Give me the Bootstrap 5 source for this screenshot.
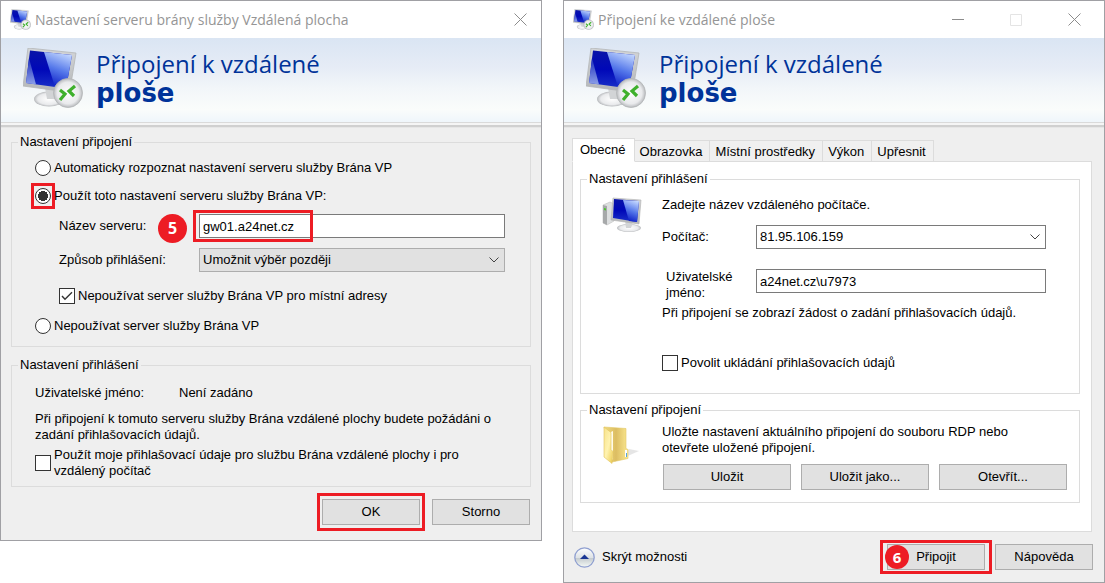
<!DOCTYPE html>
<html lang="cs">
<head>
<meta charset="utf-8">
<meta name="viewport" content="width=device-width, initial-scale=1">
<title>Připojení ke vzdálené ploše</title>
<link rel="stylesheet" href="https://cdn.jsdelivr.net/npm/bootstrap@5.3.0/dist/css/bootstrap.min.css">
<style>
  body { background: #fff; color: #000; font: 13px/16px "Liberation Sans", Arial, sans-serif; }
  .desk { gap: 21px; }
  .win { flex: 1 1 0; min-width: 0; background: #efefef; border: 1px solid #a0a0a4; }
  .titlebar { height: 37px; padding: 0 14px 0 9px; background: #fff; color: #959595; font: 14px/20px "Open Sans", sans-serif; gap: 4px; }
  .titlebar-wide { padding-right: 23px; }
  .titlebar h1 { font: inherit; }
  .winbtn { padding: 0; border: 0; background: none; color: #8c8c8c; line-height: 0; }
  .winbtns { gap: 46px; }
  .banner { height: 84px; padding: 0 0 4px 22px; gap: 13px; background: linear-gradient(#dae5f3 0, #e6ecf6 35%, #f2f6f9 60%, #fafcfb 85%, #eff6fb 100%); color: #003399; }
  .banner h2 { font: 24px/29px "Open Sans", sans-serif; }
  .banner strong { font: bold 26px/29px "DejaVu Sans", sans-serif; }
  .edge { height: 6px; background: linear-gradient(#dadada 0 1px, #f5f5f5 1px 3px, #d0d0d0 3px 5px, #e6e6e6 5px); }
  .group { border: 1px solid #dcdcdc; }
  .group legend { float: none; width: auto; margin: 0 0 0 -17px; padding: 0 2px; font-size: 13px; line-height: 16px; }
  .g-left { margin: 0 10px; padding: 0 25px 0 23px; }
  .gateway { padding-top: 6px; }
  .opt { gap: 3px; }
  .pick { appearance: none; flex: none; width: 16px; height: 16px; margin: 0; border: 1px solid #333; background: #fff; }
  .pick[type=radio] { border-radius: 50%; }
  .pick[type=radio]:checked { background: radial-gradient(circle, #333 0 5px, #fff 5px); }
  .pick[type=checkbox]:checked { background: #fff url("data:image/svg+xml,%3Csvg xmlns='http://www.w3.org/2000/svg' viewBox='0 0 14 14'%3E%3Cpath d='M2 7l3 3.300 7-7' fill='none' stroke='%23333' stroke-width='1.400'/%3E%3C/svg%3E"); }
  .indent { padding-left: 24px; }
  .field { width: 100%; height: 24px; padding: 0 3px; border: 1px solid #7a7a7a; border-radius: 0; background: #fff; color: #000; }
  select.field { appearance: none; background: #fff url("data:image/svg+xml,%3Csvg xmlns='http://www.w3.org/2000/svg' width='10' height='6'%3E%3Cpath d='M.5.5L5 5 9.500.5' fill='none' stroke='%23444'/%3E%3C/svg%3E") no-repeat right 5px center; }
  select.field.flat { background-color: #e1e1e1; border-color: #adadad; }
  .key { width: 140px; flex: none; }
  .push { height: 26px; padding: 0; border: 1px solid #adadad; background: #e1e1e1; color: #000; }
  .push-sm { width: 98px; }
  .mark-frame { position: absolute; border: 3px solid #ed1c24; pointer-events: none; }
  .on-radio { inset: -5px -4px; }
  .on-name { inset: -4px auto -4px -6px; width: 120px; }
  .on-ok { inset: -6px -5px; }
  .on-connect { inset: -4px -7px; }
  .step { position: absolute; border-radius: 50%; background: #ed1c24; color: #fff; font-family: "Open Sans", sans-serif; font-weight: bold; text-align: center; }
  .step-5 { left: -41px; top: 0; width: 29px; height: 29px; font-size: 16px; line-height: 28px; }
  .step-6 { left: -2px; top: 1px; width: 24px; height: 24px; font-size: 15px; line-height: 24px; }
  .gap-v6 { margin-top: 6px; } .gap-v10 { margin-top: 10px; } .gap-v12 { margin-top: 12px; } .gap-v14 { margin-top: 14px; } .gap-v16 { margin-top: 16px; }
  .end-v7 { margin-bottom: 7px; } .end-v12 { margin-bottom: 12px; }
  .actions { gap: 12px; padding: 0 11px 15px 0; }
  .tabs { margin: 10px 8px -1px; }
  .tab { height: 22px; padding: 1px 7px 0 5px; border: 1px solid #dcdcdc; border-left-width: 0; background: #f0f0f0; color: #000; }
  .tab.active { position: relative; height: 24px; padding: 0 8px 0 7px; border-left-width: 1px; border-bottom-color: #fff; background: #fff; }
  .pane { margin: 0 12px 0 8px; padding: 9px 11px 28px 7px; border: 1px solid #dcdcdc; background: #fff; }
  .pane .group { padding: 0 12px 0 21px; }
  .pane .group legend { margin-left: -15px; }
  .pic { width: 60px; flex: none; }
  .key-r { width: 94px; flex: none; }
  .to-field { margin-right: 21px; }
  .save-row { padding: 34px 0 22px; }
  .savebar { gap: 10px; padding-left: 1px; }
  .bottom { gap: 10px; padding: 12px 11px 12px 10px; }
  .expander { padding: 0; border: 0; background: none; color: #000; gap: 7px; }
</style>
</head>
<body>
<svg width="0" height="0" class="position-absolute" aria-hidden="true">
  <defs>
    <linearGradient id="screen" x1="0" y1="0" x2="0" y2="1"><stop offset="0" stop-color="#0a14a8"/><stop offset=".5" stop-color="#0008b8"/><stop offset="1" stop-color="#1a30c8"/></linearGradient>
    <linearGradient id="shine" x1="0.7" y1="0" x2="0.4" y2="1"><stop offset="0" stop-color="#c4d8ff"/><stop offset=".5" stop-color="#5578ea"/><stop offset="1" stop-color="#0818c4"/></linearGradient>
    <linearGradient id="glow" x1="0" y1="0" x2="0" y2="1"><stop offset="0" stop-color="#1a2cbc"/><stop offset="1" stop-color="#8c9fe8"/></linearGradient>
    <linearGradient id="metal" x1="0" y1="0" x2="0" y2="1"><stop offset="0" stop-color="#d4d6d8"/><stop offset="1" stop-color="#b4b6b8"/></linearGradient>
    <radialGradient id="ball"><stop offset="0" stop-color="#fff"/><stop offset=".75" stop-color="#e9eaec"/><stop offset="1" stop-color="#b8babd"/></radialGradient>
    <linearGradient id="fold" x1="0" y1="0" x2="1" y2="0"><stop offset="0" stop-color="#f1dc80"/><stop offset=".5" stop-color="#dcbd62"/><stop offset="1" stop-color="#fbe890"/></linearGradient>
    <linearGradient id="foldfront" x1="0" y1="0" x2="1" y2="1"><stop offset="0" stop-color="#f7e28b"/><stop offset=".5" stop-color="#fff3b0"/><stop offset="1" stop-color="#ebc94e"/></linearGradient>
    <linearGradient id="knob" x1="0" y1="0" x2="0" y2="1"><stop offset="0" stop-color="#fff"/><stop offset=".5" stop-color="#dfe3e6"/><stop offset=".55" stop-color="#c6ccd0"/><stop offset="1" stop-color="#f5faf6"/></linearGradient>
    <symbol id="monitor" viewBox="0 0 60 60">
      <ellipse cx="26" cy="51" rx="15" ry="7.500" fill="url(#ball)"/>
      <path d="M22 40l14 3-3 8h-9z" fill="#d2d4d6"/>
      <path d="M5 0l48 5-6 37-3 2L0 38z" fill="url(#metal)" stroke="#b4b6b8" stroke-width=".8"/>
      <path d="M7 2.500L49 7l-6 33.500L3 35z" fill="url(#screen)"/>
      <path d="M6 10L3 35l10 1.500z" fill="url(#glow)"/>
      <path d="M21 4l28 3-6 33.500-11-1.500z" fill="url(#shine)"/>
      <circle cx="45" cy="45" r="14.500" fill="url(#ball)" stroke="#b4b6b8" stroke-width=".8"/>
      <path d="M37 42l5 4-5 6M52 38l-6 5 5 5" fill="none" stroke="#3fb02c" stroke-width="3.200"/>
    </symbol>
  </defs>
</svg>
<main class="desk d-flex align-items-start">

  <section class="win">
    <header class="titlebar d-flex align-items-center">
      <svg width="21" height="21" aria-hidden="true"><use href="#monitor"/></svg>
      <h1 class="m-0 me-auto text-nowrap">Nastavení serveru brány služby Vzdálená plocha</h1>
      <button class="winbtn" type="button" aria-label="Zavřít"><svg width="13" height="13"><path d="M.5.5l12 12M12.500.5l-12 12" stroke="currentColor"/></svg></button>
    </header>
    <div class="banner d-flex align-items-center">
      <svg class="flex-shrink-0" width="60" height="60" aria-hidden="true"><use href="#monitor"/></svg>
      <h2 class="m-0 text-nowrap">Připojení k vzdálené<br><strong>ploše</strong></h2>
    </div>
    <div class="edge"></div>

    <form class="gateway">
      <fieldset class="group g-left">
        <legend>Nastavení připojení</legend>
        <div class="opt d-flex align-items-center gap-v10">
          <input class="pick" type="radio" name="gw" id="gw-auto"><label for="gw-auto">Automaticky rozpoznat nastavení serveru služby Brána VP</label>
        </div>
        <div class="opt d-flex align-items-center gap-v12">
          <span class="position-relative d-flex"><input class="pick" type="radio" name="gw" id="gw-use" checked><span class="mark-frame on-radio"></span></span><label for="gw-use">Použít toto nastavení serveru služby Brána VP:</label>
        </div>
        <div class="indent d-flex align-items-center gap-v10">
          <label class="key" for="gw-name">Název serveru:</label>
          <div class="position-relative flex-grow-1">
            <input class="field d-block" type="text" id="gw-name" value="gw01.a24net.cz">
            <span class="mark-frame on-name"></span><span class="step step-5">5</span>
          </div>
        </div>
        <div class="indent d-flex align-items-center gap-v10">
          <label class="key" for="gw-way">Způsob přihlášení:</label>
          <select class="field flat" id="gw-way"><option>Umožnit výběr později</option></select>
        </div>
        <div class="indent opt d-flex align-items-center gap-v16">
          <input class="pick" type="checkbox" id="gw-local" checked><label for="gw-local">Nepoužívat server služby Brána VP pro místní adresy</label>
        </div>
        <div class="opt d-flex align-items-center gap-v14 pb-2 mb-1">
          <input class="pick" type="radio" name="gw" id="gw-none"><label for="gw-none">Nepoužívat server služby Brána VP</label>
        </div>
      </fieldset>

      <fieldset class="group g-left gap-v10">
        <legend>Nastavení přihlášení</legend>
        <div class="d-flex gap-v12"><span class="key">Uživatelské jméno:</span><span class="ms-1">Není zadáno</span></div>
        <p class="mb-0 gap-v10">Při připojení k tomuto serveru služby Brána vzdálené plochy budete požádáni o zadání přihlašovacích údajů.</p>
        <div class="opt d-flex align-items-center mt-1 end-v7">
          <input class="pick" type="checkbox" id="gw-same"><label for="gw-same">Použít moje přihlašovací údaje pro službu Brána vzdálené plochy i pro vzdálený počítač</label>
        </div>
      </fieldset>

      <div class="actions d-flex justify-content-end gap-v12">
        <span class="position-relative d-flex"><button class="push push-sm" type="button">OK</button><span class="mark-frame on-ok"></span></span>
        <button class="push push-sm" type="button">Storno</button>
      </div>
    </form>
  </section>

  <section class="win">
    <header class="titlebar titlebar-wide d-flex align-items-center">
      <svg width="21" height="21" aria-hidden="true"><use href="#monitor"/></svg>
      <h1 class="m-0 me-auto text-nowrap">Připojení ke vzdálené ploše</h1>
      <div class="winbtns d-flex">
        <button class="winbtn" type="button" aria-label="Minimalizovat"><svg width="12" height="12"><path d="M0 5.500h12" stroke="currentColor"/></svg></button>
        <button class="winbtn" type="button" aria-label="Maximalizovat" disabled><svg width="12" height="12"><path d="M.5.5h11v11H.5z" fill="none" stroke="#e4e4e4"/></svg></button>
        <button class="winbtn" type="button" aria-label="Zavřít"><svg width="13" height="13"><path d="M.5.5l12 12M12.500.5l-12 12" stroke="currentColor"/></svg></button>
      </div>
    </header>
    <div class="banner d-flex align-items-center">
      <svg class="flex-shrink-0" width="60" height="60" aria-hidden="true"><use href="#monitor"/></svg>
      <h2 class="m-0 text-nowrap">Připojení k vzdálené<br><strong>ploše</strong></h2>
    </div>
    <div class="edge"></div>

    <form>
      <div class="tabs d-flex align-items-end" role="tablist">
        <button class="tab active" type="button" role="tab" aria-selected="true">Obecné</button>
        <button class="tab" type="button" role="tab">Obrazovka</button>
        <button class="tab" type="button" role="tab">Místní prostředky</button>
        <button class="tab" type="button" role="tab">Výkon</button>
        <button class="tab" type="button" role="tab">Upřesnit</button>
      </div>
      <div class="pane">
        <fieldset class="group">
          <legend>Nastavení přihlášení</legend>
          <div class="d-flex">
            <div class="pic gap-v10">
              <svg width="40" height="37" viewBox="0 0 40 37" aria-hidden="true">
                <path d="M1 8l7-3 4 2v17l-7 4-4-2z" fill="#dddfe0" stroke="#c0c0c0" stroke-width=".6"/>
                <path d="M1 8l4 1v19l-4-2z" fill="#a7a9aa"/><path d="M2 11l2 .5v2l-2-.5z" fill="#49c62e"/>
                <ellipse cx="27" cy="31" rx="12" ry="4" fill="url(#ball)"/>
                <path d="M23 23l8 2-2 6h-5z" fill="#d2d4d6"/>
                <path d="M11 1l28 2-2 24-28-4z" fill="url(#metal)" stroke="#b0b0b0" stroke-width=".6"/>
                <path d="M12 2l25 2-2 21-24-4z" fill="url(#screen)"/><path d="M21 3l16 1-2 21-8-1z" fill="url(#shine)"/>
              </svg>
            </div>
            <div class="flex-grow-1">
              <p class="gap-v10 mb-0">Zadejte název vzdáleného počítače.</p>
              <div class="d-flex align-items-center gap-v12 to-field">
                <label class="key-r" for="pc">Počítač:</label>
                <select class="field" id="pc"><option>81.95.106.159</option></select>
              </div>
              <div class="d-flex gap-v16 pt-1 to-field">
                <label class="key-r ps-1" for="user">Uživatelské jméno:</label>
                <input class="field" type="text" id="user" value="a24net.cz\u7973">
              </div>
              <p class="m-0 mt-1">Při připojení se zobrazí žádost o zadání přihlašovacích údajů.</p>
              <div class="save-row opt d-flex align-items-center">
                <input class="pick" type="checkbox" id="save"><label for="save">Povolit ukládání přihlašovacích údajů</label>
              </div>
            </div>
          </div>
        </fieldset>
        <fieldset class="group mt-2">
          <legend>Nastavení připojení</legend>
          <div class="d-flex">
            <div class="pic mt-2">
              <svg width="38" height="38" viewBox="0 0 38 38" aria-hidden="true">
                <path d="M12 36L37 25l-10-2z" fill="#888" opacity=".22"/>
                <path d="M2 1l22 1.500v20l2 1v9L10 36z" fill="url(#fold)" stroke="#e2c765" stroke-width=".6"/>
                <path d="M9 6l2-1v28l-2 2z" fill="#fffbe8"/>
                <path d="M2 1l7 5.500v17l2 2-1 12L2 31z" fill="url(#foldfront)" stroke="#e3c45e" stroke-width=".6"/>
                <path d="M24 24v7" stroke="#fff" stroke-width="2"/><path d="M24.500 27v4" stroke="#5aa5da"/>
              </svg>
            </div>
            <div class="flex-grow-1">
              <p class="gap-v6 mb-0 pe-5">Uložte nastavení aktuálního připojení do souboru RDP nebo otevřete uložené připojení.</p>
              <div class="savebar d-flex mt-2 end-v12">
                <button class="push flex-fill w-100" type="button">Uložit</button>
                <button class="push flex-fill w-100" type="button">Uložit jako...</button>
                <button class="push flex-fill w-100" type="button">Otevřít...</button>
              </div>
            </div>
          </div>
        </fieldset>
      </div>
      <div class="bottom d-flex align-items-center">
        <button class="expander d-flex align-items-center me-auto" type="button">
          <svg width="21" height="21" aria-hidden="true"><circle cx="10.500" cy="10.500" r="9.700" fill="url(#knob)" stroke="#8f9fd0" stroke-width="1.300"/><path d="M6 12l4.500-4.500L15 12z" fill="#1b3794"/></svg>
          <span>Skrýt možnosti</span>
        </button>
        <span class="position-relative d-flex"><button class="push push-sm" type="button">Připojit</button><span class="mark-frame on-connect"></span><span class="step step-6">6</span></span>
        <button class="push push-sm" type="button">Nápověda</button>
      </div>
    </form>
  </section>
</main>
<script src="https://cdn.jsdelivr.net/npm/bootstrap@5.3.0/dist/js/bootstrap.bundle.min.js"></script>
</body>
</html>
